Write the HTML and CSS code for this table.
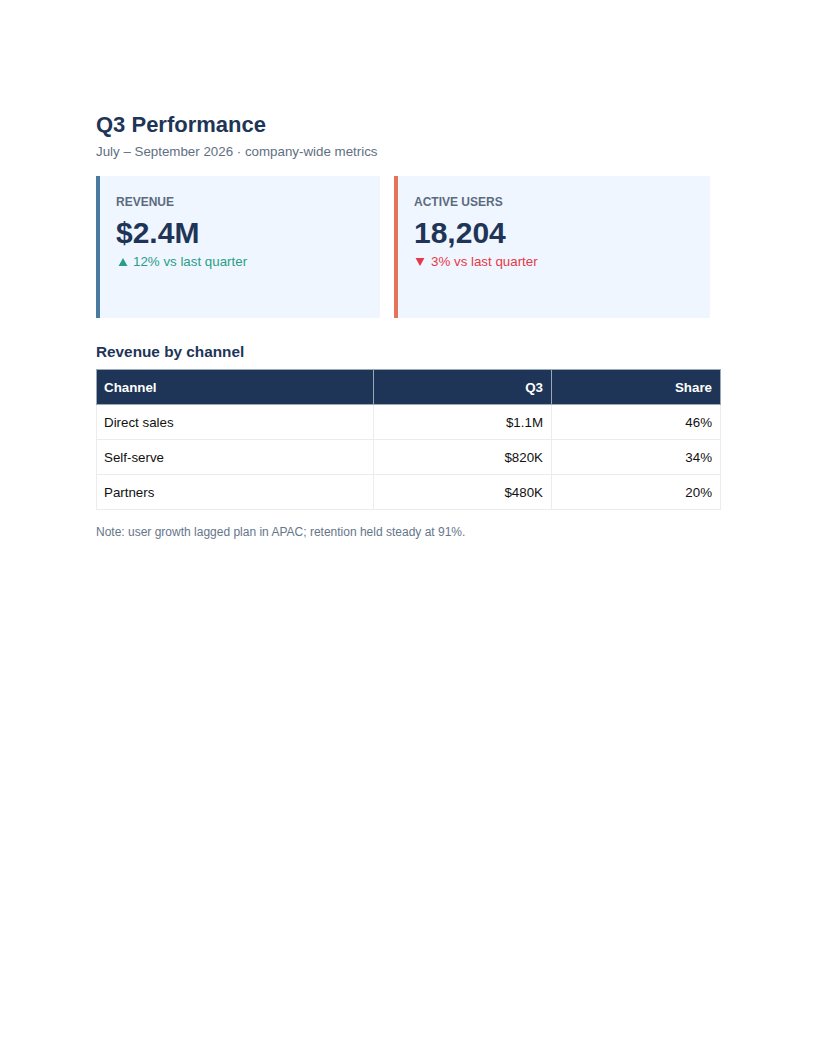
FILE: index.html
```html
<!DOCTYPE html>
<html lang="en">
<head>
<meta charset="utf-8">
<title>Q3 Performance</title>
<link rel="stylesheet" href="styles.css">
</head>
<body>
<main class="page">
  <h1 class="title">Q3 Performance</h1>
  <p class="subtitle">July – September 2026 · company-wide metrics</p>

  <section class="cards">
    <div class="card card-revenue">
      <div class="card-label">REVENUE</div>
      <div class="card-value">$2.4M</div>
      <div class="card-delta up"><svg class="tri" viewBox="0 0 10 9" aria-hidden="true"><polygon points="5,0 10,9 0,9" fill="currentColor"/></svg>12% vs last quarter</div>
    </div>
    <div class="card card-users">
      <div class="card-label">ACTIVE USERS</div>
      <div class="card-value">18,204</div>
      <div class="card-delta down"><svg class="tri" viewBox="0 0 10 9" aria-hidden="true"><polygon points="0,0 10,0 5,9" fill="currentColor"/></svg>3% vs last quarter</div>
    </div>
  </section>

  <h2 class="section-title">Revenue by channel</h2>
  <table class="data">
    <thead>
      <tr>
        <th class="col-channel">Channel</th>
        <th class="col-q3 num">Q3</th>
        <th class="col-share num">Share</th>
      </tr>
    </thead>
    <tbody>
      <tr><td>Direct sales</td><td class="num">$1.1M</td><td class="num">46%</td></tr>
      <tr><td>Self-serve</td><td class="num">$820K</td><td class="num">34%</td></tr>
      <tr><td>Partners</td><td class="num">$480K</td><td class="num">20%</td></tr>
    </tbody>
  </table>

  <p class="note">Note: user growth lagged plan in APAC; retention held steady at 91%.</p>
</main>
</body>
</html>
```

FILE: styles.css
```css
* { box-sizing: border-box; }

html, body {
  margin: 0;
  padding: 0;
  background: #ffffff;
}

body {
  font-family: "Liberation Sans", Arial, sans-serif;
  color: #111111;
}

.page {
  width: 816px;
  padding: 112px 96px 96px 96px;
}

.title {
  margin: 0;
  font-size: 22px;
  line-height: 25px;
  font-weight: 700;
  color: #1e3557;
}

.subtitle {
  margin: 6px 0 0 0;
  font-size: 13.33px;
  line-height: 18px;
  color: #5f6f82;
}

.cards {
  display: flex;
  gap: 14px;
  margin-top: 15px;
}

.card {
  height: 142px;
  padding: 19px 16px 17px 16px;
  background: #eff6ff;
  border-left: 4px solid #4a7aa0;
}

.card-revenue { width: 284px; }
.card-users { width: 316px; border-left-color: #e5735a; }

.card-label {
  font-size: 12px;
  line-height: 14px;
  font-weight: 700;
  color: #5b6b7e;
}

.card-value {
  margin-top: 7px;
  font-size: 30px;
  line-height: 33px;
  font-weight: 700;
  color: #1e3557;
}

.card-delta {
  margin-top: 4px;
  font-size: 13.33px;
  line-height: 18px;
}

.tri {
  display: inline-block;
  width: 10px;
  height: 8px;
  margin: 0 5px 0 2px;
  vertical-align: 0;
}

.card-delta.up { color: #2a9d8a; }
.card-delta.down { color: #e63946; }
.card-delta.down .tri { margin-left: 1px; margin-right: 6px; }

.section-title {
  margin: 25px 0 0 0;
  font-size: 15.33px;
  line-height: 18px;
  font-weight: 700;
  color: #1e3557;
}

.data {
  margin-top: 8px;
  width: 624px;
  border-collapse: collapse;
  font-size: 13.33px;
  table-layout: fixed;
}

.data th,
.data td {
  padding: 10px 8px 8px 7px;
  line-height: 16px;
  text-align: left;
}

.data th {
  background: #1e3557;
  color: #ffffff;
  font-weight: 700;
  border: 1px solid #9aa8b8;
}

.data td {
  border: 1px solid #ececec;
  color: #111111;
}

.data .num { text-align: right; }

.col-channel { width: 277px; }
.col-q3 { width: 178px; }
.col-share { width: 169px; }

.note {
  margin: 14px 0 0 0;
  font-size: 12px;
  line-height: 16px;
  color: #66768a;
}
```
